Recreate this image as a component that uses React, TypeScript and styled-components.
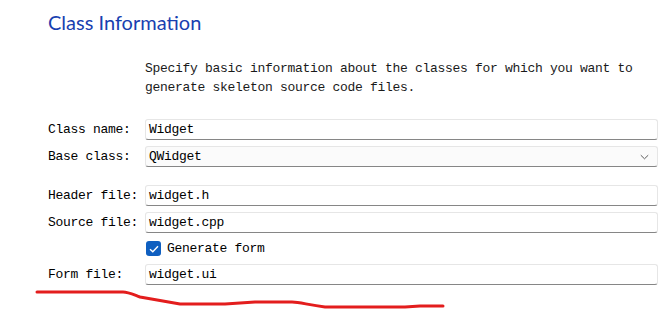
import React from 'react';
import styled, { createGlobalStyle } from 'styled-components';

const GlobalStyle = createGlobalStyle`
  html, body {
    margin: 0;
    padding: 0;
    background: #ffffff;
  }
`;

const Page = styled.div`
  position: relative;
  width: 665px;
  height: 310px;
  overflow: hidden;
  background: #ffffff;
  padding: 8px 0 0 48px;
  box-sizing: border-box;
  font-family: 'Liberation Mono', 'DejaVu Sans Mono', monospace;
  font-size: 13px;
  letter-spacing: -0.3px;
  color: #000000;
`;

const Title = styled.h1`
  margin: 0;
  font-family: Lato, 'Noto Sans', sans-serif;
  font-weight: 400;
  font-size: 20px;
  line-height: 28px;
  letter-spacing: 0;
  color: #1840b0;
`;

const Description = styled.p`
  margin: 23px 0 0 97px;
  width: 500px;
  line-height: 19px;
  color: #1a1a1a;
`;

const Form = styled.div`
  display: grid;
  grid-template-columns: 97px 513px;
  row-gap: 6px;
  margin-top: 22px;
  align-items: center;
`;

const Label = styled.label`
  line-height: 21px;
  white-space: pre;
`;

const Spacer = styled.div`
  grid-column: 1 / -1;
  height: 6px;
`;

const Field = styled.div<{ combo?: boolean }>`
  display: flex;
  align-items: center;
  height: 21px;
  box-sizing: border-box;
  padding: 0 8px 0 3px;
  border: 1px solid #e6e6e6;
  border-bottom-color: #868686;
  border-radius: 3px;
  background: ${({ combo }) => (combo ? '#fbfbfb' : '#ffffff')};
  line-height: 19px;
`;

const FieldText = styled.span`
  flex: 1;
`;

const CheckRow = styled.div`
  grid-column: 2;
  display: flex;
  align-items: center;
  gap: 6px;
  height: 19px;
  padding-left: 1px;
`;

const CheckBox = styled.span`
  display: inline-flex;
  align-items: center;
  justify-content: center;
  width: 15px;
  height: 15px;
  border-radius: 3px;
  background: #0f5fc0;
`;

const Annotation = styled.svg`
  position: absolute;
  left: 0;
  top: 0;
  pointer-events: none;
`;

const Chevron = () => (
  <svg width="9" height="6" viewBox="0 0 9 6">
    <path d="M0.8 1.2 L4.5 4.8 L8.2 1.2" fill="none" stroke="#5c5c5c" strokeWidth="1" />
  </svg>
);

const App: React.FC = () => {
  return (
    <Page>
      <GlobalStyle />
      <Title>Class Information</Title>
      <Description>
        Specify basic information about the classes for which you want to
        generate skeleton source code files.
      </Description>

      <Form>
        <Label>Class name:</Label>
        <Field>
          <FieldText>Widget</FieldText>
        </Field>

        <Label>Base class:</Label>
        <Field combo>
          <FieldText>QWidget</FieldText>
          <Chevron />
        </Field>

        <Spacer />

        <Label>Header file:</Label>
        <Field>
          <FieldText>widget.h</FieldText>
        </Field>

        <Label>Source file:</Label>
        <Field>
          <FieldText>widget.cpp</FieldText>
        </Field>

        <CheckRow>
          <CheckBox>
            <svg width="10" height="8" viewBox="0 0 10 8">
              <path d="M1 4.2 L3.8 6.8 L9 1.2" fill="none" stroke="#ffffff" strokeWidth="1.4" />
            </svg>
          </CheckBox>
          <span>Generate form</span>
        </CheckRow>

        <Label>Form file:</Label>
        <Field>
          <FieldText>widget.ui</FieldText>
        </Field>
      </Form>

      <Annotation width="665" height="310" viewBox="0 0 665 310">
        <path
          d="M37 292 L123 292 C128 292 132 294 140 297 L180 304 L225 304 L255 302 L292 302 C300 302 308 305 325 307 L405 307 L420 306 L443 306"
          fill="none"
          stroke="#e31d1d"
          strokeWidth="3"
          strokeLinecap="round"
          strokeLinejoin="round"
        />
      </Annotation>
    </Page>
  );
};

export default App;
